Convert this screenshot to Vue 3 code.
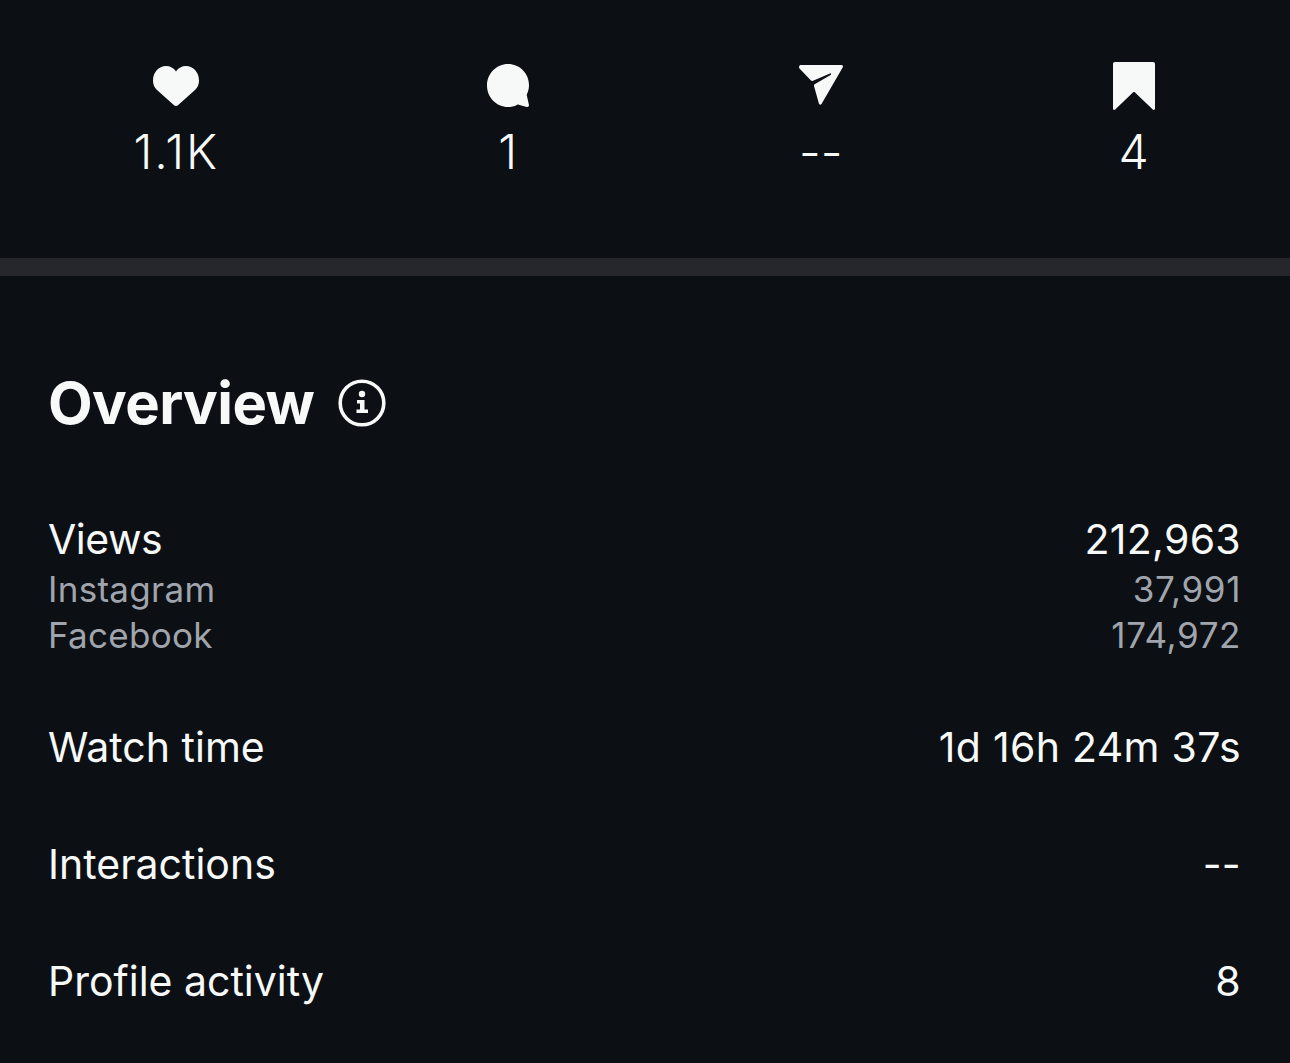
<template>
  <div class="page">
    <div class="stats">
      <div v-for="stat in stats" :key="stat.name" class="stat">
        <svg class="stat-icon" viewBox="0 0 48 48" width="48" height="48" aria-hidden="true">
          <path :d="stat.icon" fill="#f7f9f9" />
        </svg>
        <span class="stat-value" :class="{ wide: stat.name === 'likes' }">{{ stat.value }}</span>
      </div>
    </div>

    <div class="divider"></div>

    <section class="overview">
      <h2 class="title">
        Overview
        <svg class="info" viewBox="0 0 48 48" width="48" height="48" aria-hidden="true">
          <circle cx="24" cy="24" r="21.8" fill="none" stroke="#f7f9f9" stroke-width="3.6" />
          <circle cx="24" cy="15" r="3.2" fill="#f7f9f9" />
          <path d="M19 21h7.500v9.500H30V34H18.500v-3.500H22V24.500h-3z" fill="#f7f9f9" />
        </svg>
      </h2>

      <div class="group">
        <div class="row main"><span class="views">Views</span><span class="value">212,963</span></div>
        <div class="row sub"><span>Instagram</span><span class="value">37,991</span></div>
        <div class="row sub"><span>Facebook</span><span class="value">174,972</span></div>
      </div>

      <div v-for="row in rows" :key="row.label" class="row single">
        <span>{{ row.label }}</span><span class="value">{{ row.value }}</span>
      </div>
    </section>
  </div>
</template>

<script setup>
const stats = [
  {
    name: 'likes',
    value: '1.1K',
    icon: 'M24 44c-.8 0-1.500-.3-2.200-.9L5 28C2.300 25.300 1 22.300 1 18.500 1 10.500 6.500 4 14 4c4.200 0 7.700 1.900 10 5.500C26.300 5.900 29.800 4 34 4c7.500 0 13 6.500 13 14.500 0 3.800-1.300 6.800-4 9.500L26.200 43.100c-.7.600-1.400.9-2.200.9z'
  },
  {
    name: 'comments',
    value: '1',
    icon: 'M24 2c11.700 0 21 9.400 21 21 0 3.500-.7 6.200-2 9-.3.600-.3 1.200-.1 1.800l2 9c.4 1.400-.8 2.500-2.200 2.100l-8-2.200c-.6-.2-1.300-.1-1.900.2-2.700 1.300-5.600 2.100-8.800 2.100C12.400 45 3 35.400 3 23.500S12.400 2 24 2z'
  },
  {
    name: 'shares',
    value: '--',
    icon: 'M3.500 3h41c1.200 0 1.900 1.300 1.300 2.300L24.500 42c-.7 1.200-2.300.9-2.600-.4L17 24c-.2-.7 0-1.300.6-1.700l16-9.300c1-.6.400-2-.6-1.600L16 18.800c-.7.300-1.400.2-2-.2L2.500 6.500C1.500 5.300 2.200 3 3.500 3z'
  },
  {
    name: 'saves',
    value: '4',
    icon: 'M5 0h38c1.200 0 2 .8 2 2v44.500c0 1.300-1.300 1.800-2.200 1L25 30.500c-.6-.6-1.500-.6-2.100 0L5.200 47.500c-.9.800-2.200.3-2.200-1V2c0-1.200.8-2 2-2z'
  }
]

const rows = [
  { label: 'Watch time', value: '1d 16h 24m 37s' },
  { label: 'Interactions', value: '--' },
  { label: 'Profile activity', value: '8' }
]
</script>

<style>
html,
body {
  margin: 0;
  background: #0c1014;
}
</style>

<style scoped>
.page {
  height: 1063px;
  overflow: hidden;
  background: #0c1014;
  color: #f7f9f9;
  font-family: Inter, "Liberation Sans", sans-serif;
}

.stats {
  display: flex;
  justify-content: space-around;
  height: 258px;
  padding: 62px 0 0 1px;
  box-sizing: border-box;
}

.stat {
  display: flex;
  flex-direction: column;
  align-items: center;
}

.stat-icon {
  display: block;
}

.stat-value {
  margin-top: 14px;
  font-size: 48px;
  line-height: 56px;
  font-weight: 300;
}

.stat-value.wide {
  letter-spacing: 1.8px;
}

.divider {
  height: 18px;
  background: #25272c;
}

.overview {
  padding: 94px 49px 0 48px;
}

.title {
  display: flex;
  align-items: center;
  gap: 24px;
  margin: 0 0 77px;
  font-size: 58px;
  line-height: 66px;
  font-weight: 700;
  letter-spacing: -0.6px;
}

.row {
  display: flex;
  justify-content: space-between;
  font-size: 41px;
  line-height: 50px;
}

.value {
  letter-spacing: 0.3px;
}

.main {
  line-height: 53px;
}

.views {
  letter-spacing: -0.5px;
}

.sub {
  font-size: 35px;
  line-height: 46px;
  letter-spacing: 0.3px;
  color: #a0a5ad;
}

.sub .value {
  letter-spacing: 0.6px;
}

.group {
  margin-bottom: 64px;
}

.single {
  margin-bottom: 67px;
}
</style>
